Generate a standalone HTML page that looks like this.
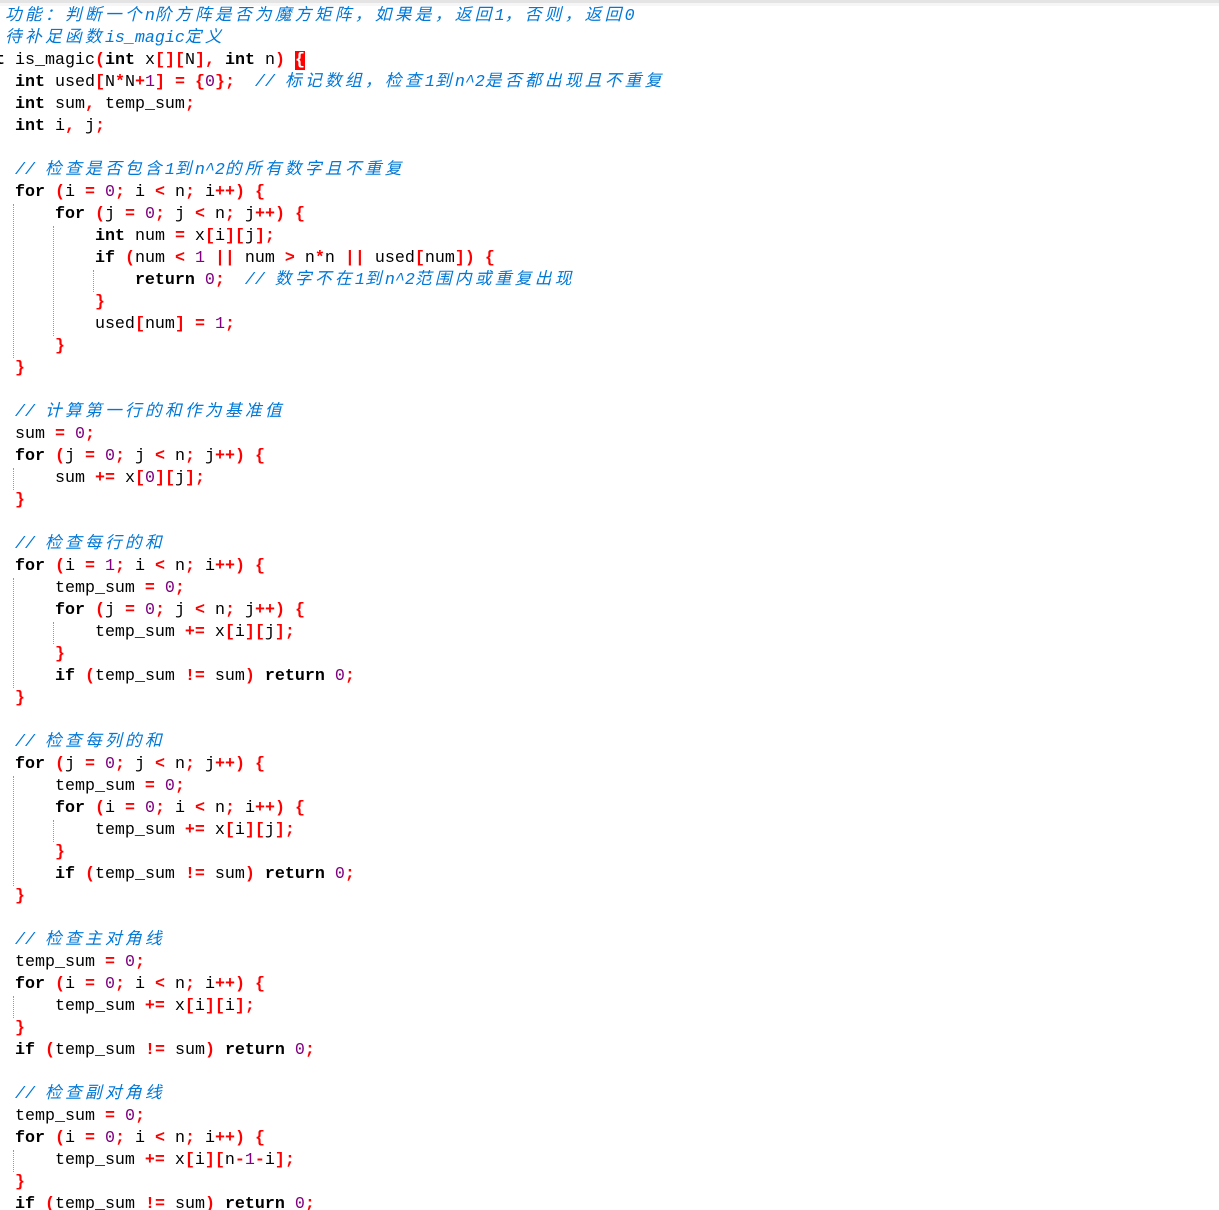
<!DOCTYPE html>
<html><head><meta charset="utf-8">
<style>
html,body{margin:0;padding:0;background:#fff;width:1219px;height:1210px;overflow:hidden;position:relative}
.top{position:absolute;left:0;top:0;width:1219px;height:3px;background:#e4e4e4}
.top2{position:absolute;left:0;top:3px;width:1219px;height:3px;background:#f6f6f6}
.code{position:absolute;left:-25px;top:6px;margin:0;font-family:"Liberation Mono","Noto Sans CJK SC",monospace;font-size:16.67px;line-height:22px;color:#000;white-space:normal}
.l{height:22px;white-space:pre}
.k{font-weight:bold}
.o{color:#f00;font-weight:bold}
.n{color:#800080}
.c{color:#0078d7;font-style:italic}
.z{letter-spacing:3.33px}
.hb{background:#f00;color:#fff;font-weight:bold}
.g{position:absolute;width:0;border-left:1px dotted #999}
</style></head><body>
<div class="top"></div><div class="top2"></div>
<div class="g" style="left:13px;top:204px;height:154px"></div>
<div class="g" style="left:53px;top:226px;height:110px"></div>
<div class="g" style="left:93px;top:270px;height:22px"></div>
<div class="g" style="left:13px;top:468px;height:22px"></div>
<div class="g" style="left:13px;top:578px;height:110px"></div>
<div class="g" style="left:53px;top:622px;height:22px"></div>
<div class="g" style="left:13px;top:776px;height:110px"></div>
<div class="g" style="left:53px;top:820px;height:22px"></div>
<div class="g" style="left:13px;top:996px;height:22px"></div>
<div class="g" style="left:13px;top:1150px;height:22px"></div>
<div class="code">
<div class="l"><span class="c">   <span class="z">功能：判断一个</span>n<span class="z">阶方阵是否为魔方矩阵，如果是，返回</span>1<span class="z">，否则，返回</span>0</span></div>
<div class="l"><span class="c">   <span class="z">待补足函数</span>is_magic<span class="z">定义</span></span></div>
<div class="l"><span class="k">int</span> is_magic<span class="o">(</span><span class="k">int</span> x<span class="o">[][</span>N<span class="o">],</span> <span class="k">int</span> n<span class="o">)</span> <span class="hb">{</span></div>
<div class="l">    <span class="k">int</span> used<span class="o">[</span>N<span class="o">*</span>N<span class="o">+</span><span class="n">1</span><span class="o">]</span> <span class="o">=</span> <span class="o">{</span><span class="n">0</span><span class="o">};</span>  <span class="c">// <span class="z">标记数组，检查</span>1<span class="z">到</span>n^2<span class="z">是否都出现且不重复</span></span></div>
<div class="l">    <span class="k">int</span> sum<span class="o">,</span> temp_sum<span class="o">;</span></div>
<div class="l">    <span class="k">int</span> i<span class="o">,</span> j<span class="o">;</span></div>
<div class="l"> </div>
<div class="l">    <span class="c">// <span class="z">检查是否包含</span>1<span class="z">到</span>n^2<span class="z">的所有数字且不重复</span></span></div>
<div class="l">    <span class="k">for</span> <span class="o">(</span>i <span class="o">=</span> <span class="n">0</span><span class="o">;</span> i <span class="o">&lt;</span> n<span class="o">;</span> i<span class="o">++)</span> <span class="o">{</span></div>
<div class="l">        <span class="k">for</span> <span class="o">(</span>j <span class="o">=</span> <span class="n">0</span><span class="o">;</span> j <span class="o">&lt;</span> n<span class="o">;</span> j<span class="o">++)</span> <span class="o">{</span></div>
<div class="l">            <span class="k">int</span> num <span class="o">=</span> x<span class="o">[</span>i<span class="o">][</span>j<span class="o">];</span></div>
<div class="l">            <span class="k">if</span> <span class="o">(</span>num <span class="o">&lt;</span> <span class="n">1</span> <span class="o">||</span> num <span class="o">&gt;</span> n<span class="o">*</span>n <span class="o">||</span> used<span class="o">[</span>num<span class="o">])</span> <span class="o">{</span></div>
<div class="l">                <span class="k">return</span> <span class="n">0</span><span class="o">;</span>  <span class="c">// <span class="z">数字不在</span>1<span class="z">到</span>n^2<span class="z">范围内或重复出现</span></span></div>
<div class="l">            <span class="o">}</span></div>
<div class="l">            used<span class="o">[</span>num<span class="o">]</span> <span class="o">=</span> <span class="n">1</span><span class="o">;</span></div>
<div class="l">        <span class="o">}</span></div>
<div class="l">    <span class="o">}</span></div>
<div class="l"> </div>
<div class="l">    <span class="c">// <span class="z">计算第一行的和作为基准值</span></span></div>
<div class="l">    sum <span class="o">=</span> <span class="n">0</span><span class="o">;</span></div>
<div class="l">    <span class="k">for</span> <span class="o">(</span>j <span class="o">=</span> <span class="n">0</span><span class="o">;</span> j <span class="o">&lt;</span> n<span class="o">;</span> j<span class="o">++)</span> <span class="o">{</span></div>
<div class="l">        sum <span class="o">+=</span> x<span class="o">[</span><span class="n">0</span><span class="o">][</span>j<span class="o">];</span></div>
<div class="l">    <span class="o">}</span></div>
<div class="l"> </div>
<div class="l">    <span class="c">// <span class="z">检查每行的和</span></span></div>
<div class="l">    <span class="k">for</span> <span class="o">(</span>i <span class="o">=</span> <span class="n">1</span><span class="o">;</span> i <span class="o">&lt;</span> n<span class="o">;</span> i<span class="o">++)</span> <span class="o">{</span></div>
<div class="l">        temp_sum <span class="o">=</span> <span class="n">0</span><span class="o">;</span></div>
<div class="l">        <span class="k">for</span> <span class="o">(</span>j <span class="o">=</span> <span class="n">0</span><span class="o">;</span> j <span class="o">&lt;</span> n<span class="o">;</span> j<span class="o">++)</span> <span class="o">{</span></div>
<div class="l">            temp_sum <span class="o">+=</span> x<span class="o">[</span>i<span class="o">][</span>j<span class="o">];</span></div>
<div class="l">        <span class="o">}</span></div>
<div class="l">        <span class="k">if</span> <span class="o">(</span>temp_sum <span class="o">!=</span> sum<span class="o">)</span> <span class="k">return</span> <span class="n">0</span><span class="o">;</span></div>
<div class="l">    <span class="o">}</span></div>
<div class="l"> </div>
<div class="l">    <span class="c">// <span class="z">检查每列的和</span></span></div>
<div class="l">    <span class="k">for</span> <span class="o">(</span>j <span class="o">=</span> <span class="n">0</span><span class="o">;</span> j <span class="o">&lt;</span> n<span class="o">;</span> j<span class="o">++)</span> <span class="o">{</span></div>
<div class="l">        temp_sum <span class="o">=</span> <span class="n">0</span><span class="o">;</span></div>
<div class="l">        <span class="k">for</span> <span class="o">(</span>i <span class="o">=</span> <span class="n">0</span><span class="o">;</span> i <span class="o">&lt;</span> n<span class="o">;</span> i<span class="o">++)</span> <span class="o">{</span></div>
<div class="l">            temp_sum <span class="o">+=</span> x<span class="o">[</span>i<span class="o">][</span>j<span class="o">];</span></div>
<div class="l">        <span class="o">}</span></div>
<div class="l">        <span class="k">if</span> <span class="o">(</span>temp_sum <span class="o">!=</span> sum<span class="o">)</span> <span class="k">return</span> <span class="n">0</span><span class="o">;</span></div>
<div class="l">    <span class="o">}</span></div>
<div class="l"> </div>
<div class="l">    <span class="c">// <span class="z">检查主对角线</span></span></div>
<div class="l">    temp_sum <span class="o">=</span> <span class="n">0</span><span class="o">;</span></div>
<div class="l">    <span class="k">for</span> <span class="o">(</span>i <span class="o">=</span> <span class="n">0</span><span class="o">;</span> i <span class="o">&lt;</span> n<span class="o">;</span> i<span class="o">++)</span> <span class="o">{</span></div>
<div class="l">        temp_sum <span class="o">+=</span> x<span class="o">[</span>i<span class="o">][</span>i<span class="o">];</span></div>
<div class="l">    <span class="o">}</span></div>
<div class="l">    <span class="k">if</span> <span class="o">(</span>temp_sum <span class="o">!=</span> sum<span class="o">)</span> <span class="k">return</span> <span class="n">0</span><span class="o">;</span></div>
<div class="l"> </div>
<div class="l">    <span class="c">// <span class="z">检查副对角线</span></span></div>
<div class="l">    temp_sum <span class="o">=</span> <span class="n">0</span><span class="o">;</span></div>
<div class="l">    <span class="k">for</span> <span class="o">(</span>i <span class="o">=</span> <span class="n">0</span><span class="o">;</span> i <span class="o">&lt;</span> n<span class="o">;</span> i<span class="o">++)</span> <span class="o">{</span></div>
<div class="l">        temp_sum <span class="o">+=</span> x<span class="o">[</span>i<span class="o">][</span>n<span class="o">-</span><span class="n">1</span><span class="o">-</span>i<span class="o">];</span></div>
<div class="l">    <span class="o">}</span></div>
<div class="l">    <span class="k">if</span> <span class="o">(</span>temp_sum <span class="o">!=</span> sum<span class="o">)</span> <span class="k">return</span> <span class="n">0</span><span class="o">;</span></div>
</div>
</body></html>
